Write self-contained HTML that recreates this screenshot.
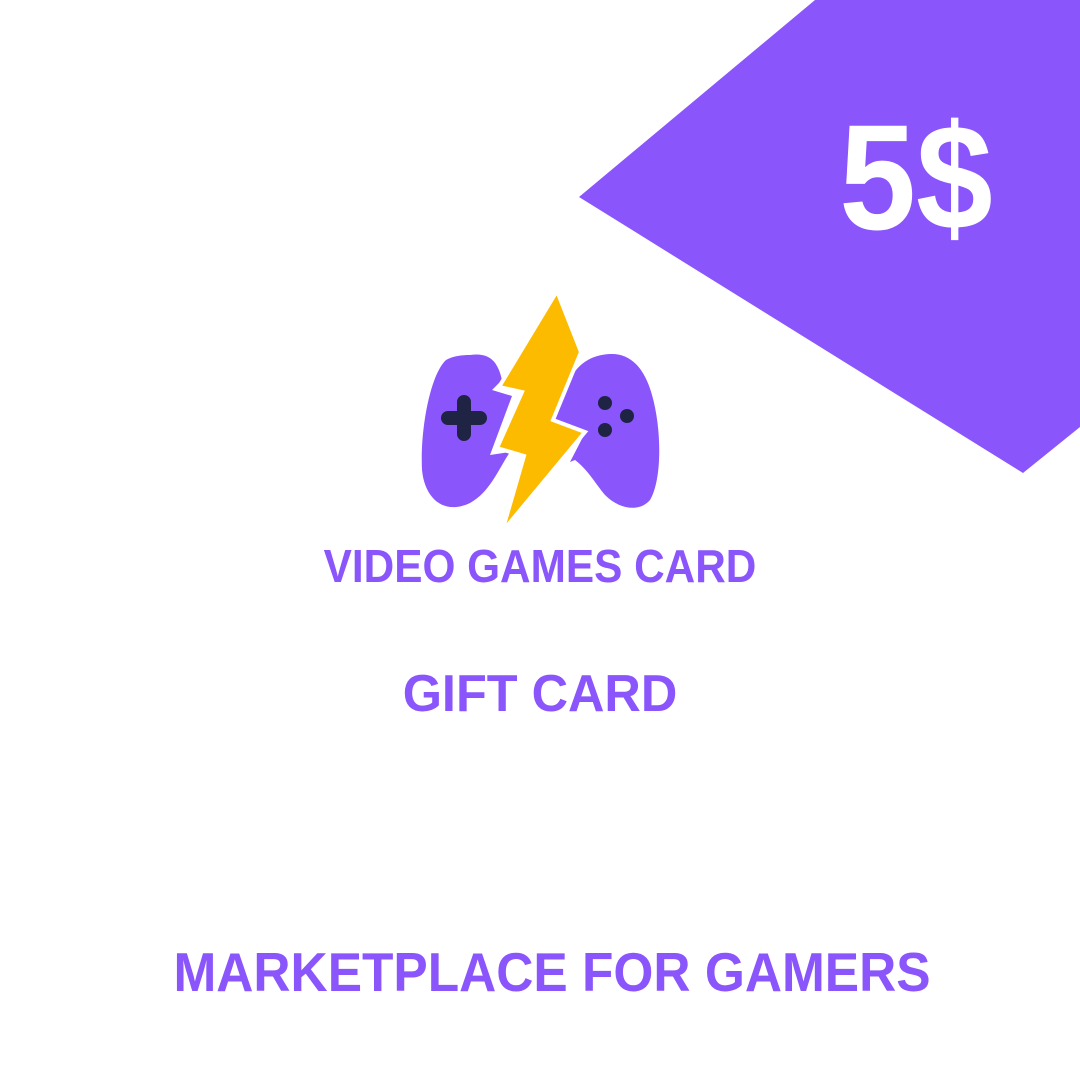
<!DOCTYPE html>
<html><head><meta charset="utf-8"><style>
html,body{margin:0;padding:0;background:#fff;width:1080px;height:1080px;overflow:hidden}
body{position:relative;font-family:"Liberation Sans",sans-serif}
.t{position:absolute;left:0;width:1080px;text-align:center;color:#8b55fc;font-weight:bold;white-space:nowrap}
</style></head><body>
<svg width="1080" height="1080" style="position:absolute;left:0;top:0">
<polygon points="815,0 1080,0 1080,427 1023,473 579,197" fill="#8b55fc"/>
<path d="M470,355 C490,352 498,362 502,380 L492,390 L512,396 L490,455 L510,452 C498,470 490,492 470,503 C445,515 425,500 422,470 C420,430 430,375 446,360 C453,356 462,355 470,355Z" fill="#8b55fc"/>
<path d="M610,354 C632,353 645,370 652,395 C662,430 662,480 650,500 C640,512 620,510 605,495 C595,483 588,470 575,460 L570,462 L585,433 L555,420 L568,385 C575,365 590,355 610,354Z" fill="#8b55fc"/>
<g fill="#1f2344">
<rect x="441" y="411" width="46" height="14" rx="7"/><rect x="457" y="395" width="14" height="46" rx="7"/>
<circle cx="605" cy="403" r="7"/><circle cx="627" cy="416" r="7"/><circle cx="605" cy="430" r="7"/>
</g>
<polygon points="557,291 581,352 553,420 585,432 502,532 524,456 497,448 522,392 499,387" fill="#fdbb00" stroke="#fff" stroke-width="4" stroke-linejoin="miter"/>
</svg>
<div class="t" style="top:539px;font-size:46px;transform:scaleX(0.92);left:0">VIDEO GAMES CARD</div>
<div class="t" style="top:664px;font-size:52px;transform:scaleX(0.97)">GIFT CARD</div>
<div class="t" style="top:940px;font-size:55px;transform:scaleX(0.935);left:12px">MARKETPLACE FOR GAMERS</div>
<div style="position:absolute;left:826px;top:92px;width:180px;text-align:center;color:#fff;font-size:150px;font-weight:bold;line-height:170px;transform:scaleX(0.92);font-family:'Liberation Sans',sans-serif">5$</div>
</body></html>
